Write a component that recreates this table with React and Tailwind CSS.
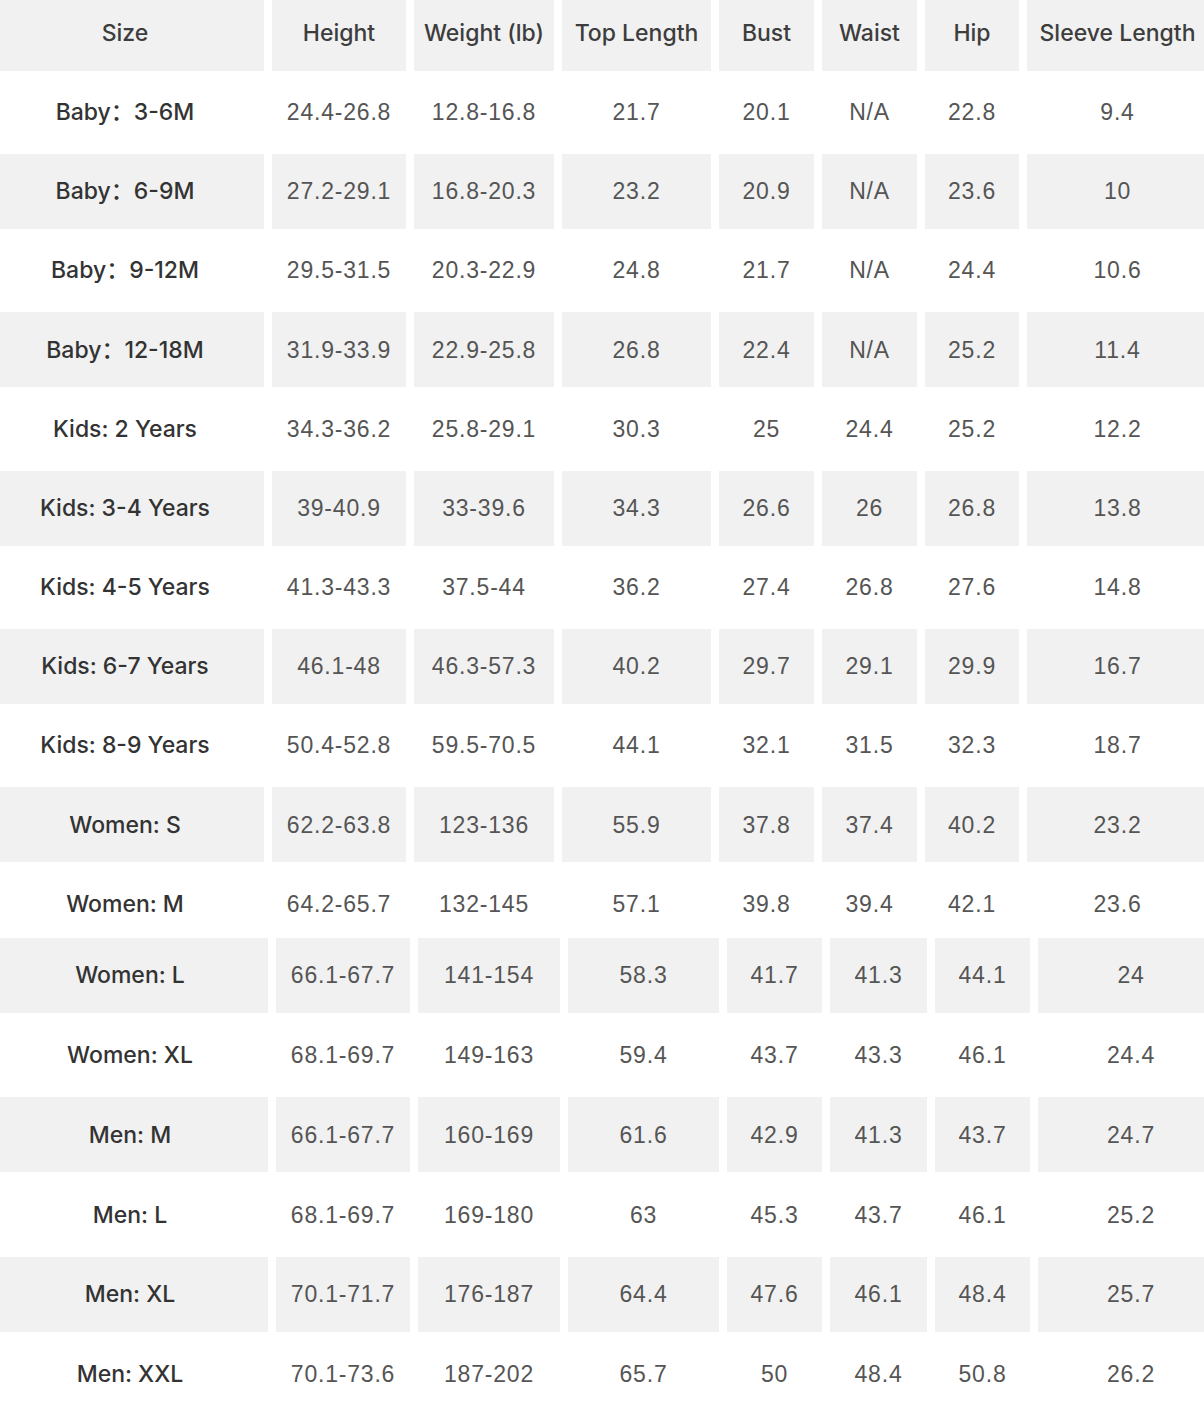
import React from 'react';

const headers = ['Size', 'Height', 'Weight (lb)', 'Top Length', 'Bust', 'Waist', 'Hip', 'Sleeve Length'];

const topRows = [
  ['Baby：3-6M', '24.4-26.8', '12.8-16.8', '21.7', '20.1', 'N/A', '22.8', '9.4'],
  ['Baby：6-9M', '27.2-29.1', '16.8-20.3', '23.2', '20.9', 'N/A', '23.6', '10'],
  ['Baby：9-12M', '29.5-31.5', '20.3-22.9', '24.8', '21.7', 'N/A', '24.4', '10.6'],
  ['Baby：12-18M', '31.9-33.9', '22.9-25.8', '26.8', '22.4', 'N/A', '25.2', '11.4'],
  ['Kids: 2 Years', '34.3-36.2', '25.8-29.1', '30.3', '25', '24.4', '25.2', '12.2'],
  ['Kids: 3-4 Years', '39-40.9', '33-39.6', '34.3', '26.6', '26', '26.8', '13.8'],
  ['Kids: 4-5 Years', '41.3-43.3', '37.5-44', '36.2', '27.4', '26.8', '27.6', '14.8'],
  ['Kids: 6-7 Years', '46.1-48', '46.3-57.3', '40.2', '29.7', '29.1', '29.9', '16.7'],
  ['Kids: 8-9 Years', '50.4-52.8', '59.5-70.5', '44.1', '32.1', '31.5', '32.3', '18.7'],
  ['Women: S', '62.2-63.8', '123-136', '55.9', '37.8', '37.4', '40.2', '23.2'],
  ['Women: M', '64.2-65.7', '132-145', '57.1', '39.8', '39.4', '42.1', '23.6'],
];

const bottomRows = [
  ['Women: L', '66.1-67.7', '141-154', '58.3', '41.7', '41.3', '44.1', '24'],
  ['Women: XL', '68.1-69.7', '149-163', '59.4', '43.7', '43.3', '46.1', '24.4'],
  ['Men: M', '66.1-67.7', '160-169', '61.6', '42.9', '41.3', '43.7', '24.7'],
  ['Men: L', '68.1-69.7', '169-180', '63', '45.3', '43.7', '46.1', '25.2'],
  ['Men: XL', '70.1-71.7', '176-187', '64.4', '47.6', '46.1', '48.4', '25.7'],
  ['Men: XXL', '70.1-73.6', '187-202', '65.7', '50', '48.4', '50.8', '26.2'],
];

const labelFont = { fontFamily: 'Inter, "Noto Sans CJK SC", sans-serif' };
const numFont = { fontFamily: '"Liberation Sans", Arial, sans-serif' };

const Row = ({ cells, gray, header, cols, firstPad, lastPad }) => (
  <div className={`grid ${cols} gap-x-2 h-[75px]`}>
    {cells.map((c, i) => {
      const isLabel = header || i === 0;
      return (
        <div
          key={i}
          className={`flex items-center justify-center ${gray ? 'bg-[#f1f1f1]' : ''} ${i === 0 ? firstPad : ''} ${i === cells.length - 1 ? lastPad : ''}`}
        >
          <span
            style={isLabel ? labelFont : numFont}
            className={
              header
                ? 'text-[23px] font-medium text-[#3d3d3d]'
                : i === 0
                ? 'text-[23px] font-medium text-[#333]'
                : 'text-[23px] tracking-[0.8px] text-[#555]'
            }
          >
            {c}
          </span>
        </div>
      );
    })}
  </div>
);

export default function App() {
  const topCols = 'grid-cols-[264px_134px_140px_149px_95px_95px_94px_1fr]';
  const bottomCols = 'grid-cols-[268px_134px_142px_151px_95px_97px_95px_1fr]';

  return (
    <div className="w-[1204px] h-[1406px] overflow-hidden bg-white">
      <div className="flex flex-col gap-y-[4.2px] -mt-[4.5px]">
        <Row cells={headers} gray header cols={topCols} firstPad="pr-[14px]" lastPad="pl-[4px]" />
        {topRows.map((r, i) => (
          <Row key={i} cells={r} gray={i % 2 === 1} cols={topCols} firstPad="pr-[14px]" lastPad="pl-[4px]" />
        ))}
      </div>
      <div className="flex flex-col gap-y-[4.8px] -mt-[3.7px]">
        {bottomRows.map((r, i) => (
          <Row key={i} cells={r} gray={i % 2 === 0} cols={bottomCols} firstPad="pr-[8px]" lastPad="pl-[20px]" />
        ))}
      </div>
    </div>
  );
}
